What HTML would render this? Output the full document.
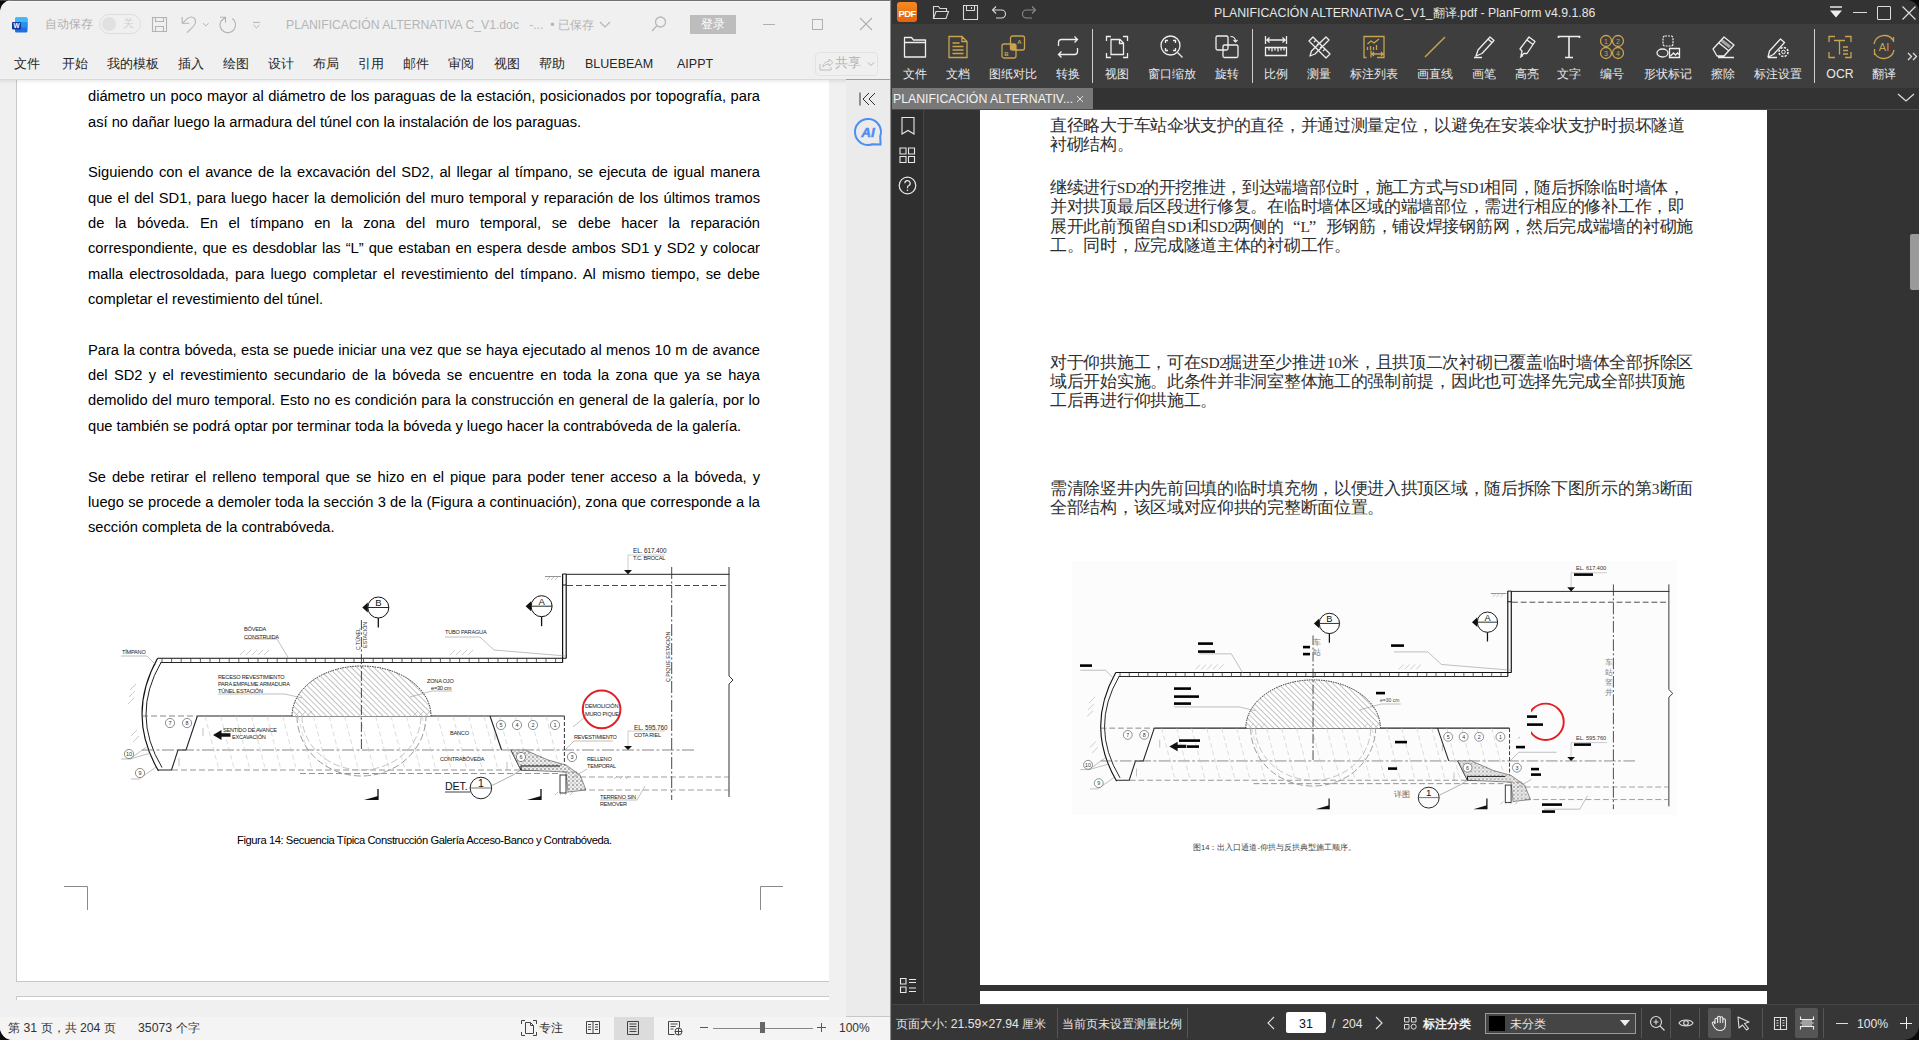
<!DOCTYPE html>
<html><head><meta charset="utf-8">
<style>
*{margin:0;padding:0;box-sizing:border-box}
html,body{width:1919px;height:1040px;overflow:hidden;background:#0a0a0a;font-family:"Liberation Sans",sans-serif}
.abs{position:absolute}
#word{position:absolute;left:0;top:0;width:891px;height:1040px;background:#f0f0f0;overflow:hidden;border-top-left-radius:12px;border-bottom-left-radius:13px}
#pdf{position:absolute;left:891px;top:0;width:1028px;height:1040px;background:#333;overflow:hidden}
.t{position:absolute;white-space:nowrap}
.wl{position:absolute;left:88px;width:672px;font-size:14.7px;line-height:24px;color:#000;white-space:nowrap}
.cn{position:absolute;left:159px;font-size:17px;letter-spacing:-0.3px;line-height:19.2px;color:#2e2e2e;white-space:nowrap;font-family:"Liberation Serif",serif}
.fw{display:inline-block;width:16.7px;letter-spacing:0}
.hw{display:inline-block;text-align:center;font-family:"Liberation Serif",serif;font-size:15.5px;letter-spacing:-0.5px}
.wl.j{text-align:justify;text-align-last:justify;white-space:normal}
</style></head><body>
<div class="abs" style="left:0;top:0;width:1919px;height:1px;background:#3a3a3a"></div>

<div id="word">
  <div class="abs" style="left:0;top:0;width:891px;height:1px;background:#707070"></div>
  <div class="abs" style="left:0;top:1px;width:890px;height:1px;background:#f7f7f7"></div>
  <!-- title bar -->
  <svg class="abs" style="left:12px;top:17px" width="16" height="16" viewBox="0 0 16 16">
    <rect x="3" y="0.5" width="12.5" height="15" rx="1.5" fill="#1e6fe0"/>
    <rect x="3" y="0.5" width="12.5" height="5" rx="1.2" fill="#41b8f8"/>
    <rect x="3" y="5.5" width="12.5" height="5" fill="#2a8ef0"/>
    <rect x="0" y="5" width="9" height="7.5" rx="1" fill="#13399e"/>
    <text x="4.5" y="11" font-size="6.5" font-weight="bold" fill="#fff" text-anchor="middle" font-family="Liberation Sans">W</text>
  </svg>
  <div class="t" style="left:45px;top:16px;font-size:12px;line-height:16px;color:#b0b0b0">自动保存</div>
  <div class="abs" style="left:99px;top:14px;width:42px;height:20px;border:1px solid #dedede;border-radius:10px"></div>
  <div class="abs" style="left:102px;top:17px;width:14px;height:14px;border-radius:7px;background:#e1e1e1"></div>
  <div class="t" style="left:123px;top:16px;font-size:11px;line-height:14px;color:#d0d0d0">关</div>
  <svg class="abs" style="left:150px;top:15px" width="120" height="20" viewBox="0 0 120 20" fill="none" stroke="#b3b3b3" stroke-width="1.1">
    <path d="M2.5 2.5h14v14h-14z M5.5 2.5v4h8v-4 M5.5 16.5v-5h8v5"/>
    <path d="M32.2 2 V8.3 H39.2 M32.8 8 C36 4.5, 38.5 2, 41 2 C 44 2, 46 4.5, 45.5 7.5 C 45 10.5, 42 13, 37 17.6"/>
    <path d="M53 8.2 l2.8 2.6 l2.8 -2.6" stroke-width="1"/>
    <path d="M70 2.3 H75.5 V7.7 M82.3 3.46 A7.8 7.8 0 1 1 71.05 5.95 L75.3 2.5"/>
    <path d="M103 7.4 H110 M103.5 10 l3 2.8 l3 -2.8" stroke-width="1"/>
  </svg>
  <div class="t" style="left:286px;top:16.5px;font-size:12.2px;line-height:17px;color:#b5b5b5">PLANIFICACIÓN ALTERNATIVA C_V1.doc&nbsp;&nbsp;&nbsp;-...&nbsp;&nbsp;•&nbsp;已保存</div>
  <svg class="abs" style="left:598px;top:19px" width="14" height="10" viewBox="0 0 14 10" fill="none" stroke="#b5b5b5" stroke-width="1.2"><path d="M2 3 l5 5 l5 -5"/></svg>
  <svg class="abs" style="left:650px;top:15px" width="18" height="18" viewBox="0 0 18 18" fill="none" stroke="#b8b8b8" stroke-width="1.3"><circle cx="10.5" cy="7" r="5"/><path d="M7 10.5 L2 16"/></svg>
  <div class="abs" style="left:690px;top:15px;width:46px;height:19px;background:#bdbdbd;color:#fff;font-size:12px;line-height:19px;text-align:center">登录</div>
  <div class="abs" style="left:763px;top:24px;width:12px;height:1px;background:#b0b0b0"></div>
  <div class="abs" style="left:812px;top:19px;width:11px;height:11px;border:1px solid #b0b0b0"></div>
  <svg class="abs" style="left:859px;top:17px" width="14" height="14" viewBox="0 0 14 14" stroke="#b0b0b0" stroke-width="1.1"><path d="M1 1 L13 13 M13 1 L1 13"/></svg>
  <!-- ribbon tabs -->
  <div class="t" style="left:14px;top:55px;font-size:13px;line-height:17px;color:#262626">文件</div>
  <div class="t" style="left:62px;top:55px;font-size:13px;line-height:17px;color:#262626">开始</div>
  <div class="t" style="left:107px;top:55px;font-size:13px;line-height:17px;color:#262626">我的模板</div>
  <div class="t" style="left:178px;top:55px;font-size:13px;line-height:17px;color:#262626">插入</div>
  <div class="t" style="left:223px;top:55px;font-size:13px;line-height:17px;color:#262626">绘图</div>
  <div class="t" style="left:268px;top:55px;font-size:13px;line-height:17px;color:#262626">设计</div>
  <div class="t" style="left:313px;top:55px;font-size:13px;line-height:17px;color:#262626">布局</div>
  <div class="t" style="left:358px;top:55px;font-size:13px;line-height:17px;color:#262626">引用</div>
  <div class="t" style="left:403px;top:55px;font-size:13px;line-height:17px;color:#262626">邮件</div>
  <div class="t" style="left:448px;top:55px;font-size:13px;line-height:17px;color:#262626">审阅</div>
  <div class="t" style="left:494px;top:55px;font-size:13px;line-height:17px;color:#262626">视图</div>
  <div class="t" style="left:539px;top:55px;font-size:13px;line-height:17px;color:#262626">帮助</div>
  <div class="t" style="left:585px;top:56px;font-size:12.5px;line-height:17px;color:#262626">BLUEBEAM</div>
  <div class="t" style="left:677px;top:56px;font-size:12.5px;line-height:17px;color:#262626">AIPPT</div>
  <div class="abs" style="left:815px;top:52px;width:63px;height:24px;border:1px solid #e3e3e3;border-radius:4px"></div>
  <svg class="abs" style="left:818px;top:56px" width="16" height="16" viewBox="0 0 16 16" fill="none" stroke="#bdbdbd" stroke-width="1"><path d="M2 8v6h11v-3 M5 11 C5 7, 8 5.5, 11 5.5 V3 l4 3.5 l-4 3.5 V8 C 8.5 8, 6.5 9, 5 11z"/></svg>
  <div class="t" style="left:835px;top:55px;font-size:13px;line-height:16px;color:#b3b3b3">共享</div>
  <svg class="abs" style="left:866px;top:60px" width="10" height="8" viewBox="0 0 10 8" fill="none" stroke="#b3b3b3" stroke-width="1"><path d="M2 2.5 l3 3 l3 -3"/></svg>
  <div class="abs" style="left:0;top:79px;width:891px;height:1px;background:#d9d9d9"></div>
  <!-- doc area -->
  <div class="abs" style="left:16px;top:80px;width:813px;height:902px;background:#fff;border-left:1px solid #c8c8c8;border-bottom:1px solid #c8c8c8"></div>
  <div class="abs" style="left:16px;top:996px;width:813px;height:4px;background:#fff;border-left:1px solid #c8c8c8;border-top:1px solid #c8c8c8"></div>
  <div class="abs" style="left:846px;top:80px;width:44px;height:936px;background:#ebebeb"></div>
  <div class="abs" style="left:846px;top:79px;width:44px;height:1px;background:#9e9e9e"></div>
  <div class="abs" style="left:0;top:80px;width:846px;height:4px;background:linear-gradient(rgba(0,0,0,0.07),rgba(0,0,0,0))"></div>
  <div id="wtext">
<div class="wl j" style="top:84.1px">diámetro un poco mayor al diámetro de los paraguas de la estación, posicionados por topografía, para</div>
<div class="wl" style="top:109.5px">así no dañar luego la armadura del túnel con la instalación de los paraguas.</div>
<div class="wl j" style="top:160.2px">Siguiendo con el avance de la excavación del SD2, al llegar al tímpano, se ejecuta de igual manera</div>
<div class="wl j" style="top:185.5px">que el del SD1, para luego hacer la demolición del muro temporal y reparación de los últimos tramos</div>
<div class="wl j" style="top:210.9px">de la bóveda. En el tímpano en la zona del muro temporal, se debe hacer la reparación</div>
<div class="wl j" style="top:236.3px">correspondiente, que es desdoblar las “L” que estaban en espera desde ambos SD1 y SD2 y colocar</div>
<div class="wl j" style="top:261.6px">malla electrosoldada, para luego completar el revestimiento del tímpano. Al mismo tiempo, se debe</div>
<div class="wl" style="top:287.0px">completar el revestimiento del túnel.</div>
<div class="wl j" style="top:337.7px">Para la contra bóveda, esta se puede iniciar una vez que se haya ejecutado al menos 10 m de avance</div>
<div class="wl j" style="top:363.1px">del SD2 y el revestimiento secundario de la bóveda se encuentre en toda la zona que ya se haya</div>
<div class="wl j" style="top:388.4px">demolido del muro temporal. Esto no es condición para la construcción en general de la galería, por lo</div>
<div class="wl" style="top:413.8px">que también se podrá optar por terminar toda la bóveda y luego hacer la contrabóveda de la galería.</div>
<div class="wl j" style="top:464.5px">Se debe retirar el relleno temporal que se hizo en el pique para poder tener acceso a la bóveda, y</div>
<div class="wl j" style="top:489.9px">luego se procede a demoler toda la sección 3 de la (Figura a continuación), zona que corresponde a la</div>
<div class="wl" style="top:515.2px">sección completa de la contrabóveda.</div>
  </div>
<svg class="abs" style="left:0;top:0" width="891" height="1040" font-family="Liberation Sans">
<defs>
<pattern id="hatch" patternUnits="userSpaceOnUse" width="4" height="4" patternTransform="rotate(-45)"><rect width="4" height="4" fill="#fff"/><path d="M0 0 V4" stroke="#777" stroke-width="0.9"/></pattern>
<pattern id="grav" patternUnits="userSpaceOnUse" width="4" height="4"><rect width="4" height="4" fill="#eee"/><circle cx="1" cy="1" r="0.7" fill="#444"/><circle cx="3" cy="3" r="0.6" fill="#777"/></pattern>
</defs>
<g id="dl" fill="none">
<path d="M157.6 658.3 H566" stroke="#111" stroke-width="1.1"/>
<path d="M160.5 662.5 H562.6" stroke="#222" stroke-width="1"/>
<path d="M162.0 658.5 V662.5 M171.6 658.5 V662.5 M181.2 658.5 V662.5 M190.8 658.5 V662.5 M200.4 658.5 V662.5 M210.0 658.5 V662.5 M219.6 658.5 V662.5 M229.2 658.5 V662.5 M238.8 658.5 V662.5 M248.4 658.5 V662.5 M258.0 658.5 V662.5 M267.6 658.5 V662.5 M277.2 658.5 V662.5 M286.8 658.5 V662.5 M296.4 658.5 V662.5 M306.0 658.5 V662.5 M315.6 658.5 V662.5 M325.2 658.5 V662.5 M334.8 658.5 V662.5 M344.4 658.5 V662.5 M354.0 658.5 V662.5 M363.6 658.5 V662.5 M373.2 658.5 V662.5 M382.8 658.5 V662.5 M392.4 658.5 V662.5 M402.0 658.5 V662.5 M411.6 658.5 V662.5 M421.2 658.5 V662.5 M430.8 658.5 V662.5 M440.4 658.5 V662.5 M450.0 658.5 V662.5 M459.6 658.5 V662.5 M469.2 658.5 V662.5 M478.8 658.5 V662.5 M488.4 658.5 V662.5 M498.0 658.5 V662.5 M507.6 658.5 V662.5 M517.2 658.5 V662.5 M526.8 658.5 V662.5 M536.4 658.5 V662.5 M546.0 658.5 V662.5 M555.6 658.5 V662.5" stroke="#333" stroke-width="0.8"/>
<path d="M562.6 574 V662.5 M566.2 574 V658.5" stroke="#111" stroke-width="1.2"/>
<path d="M562.6 574 H566.2 M562.6 585 H566.2" stroke="#111" stroke-width="1"/>
<path d="M566 574.3 H729.5" stroke="#222" stroke-width="1"/>
<path d="M567 585.5 H729" stroke="#333" stroke-width="0.9" stroke-dasharray="6 3"/>
<path d="M729 567 V676 l4 4 l-4 4 V797" stroke="#333" stroke-width="1"/>
<path d="M671.7 567 V800" stroke="#333" stroke-width="0.9" stroke-dasharray="12 2.5 2 2.5"/>
<path d="M545 576.5 H561" stroke="#777" stroke-width="0.8"/>
<path d="M547 580 l3 -3 M551 580 l3 -3 M555 580 l3 -3" stroke="#999" stroke-width="0.6"/>
<path d="M157.6 658.3 Q126 715 158.5 771" stroke="#111" stroke-width="1.15" fill="none"/>
<path d="M161 662.5 Q130.5 715 162 767.5" stroke="#222" stroke-width="1" fill="none"/>
<path d="M197.4 716 H564.4" stroke="#222" stroke-width="1.1"/>
<path d="M142 716 H197" stroke="#555" stroke-width="0.7" stroke-dasharray="6 3"/>
<path d="M197.4 716 L186 750 H178 L171.5 770 H158" stroke="#222" stroke-width="1.1" fill="none"/>
<path d="M142 750 H695" stroke="#555" stroke-width="0.7" stroke-dasharray="12 2.5 3 2.5"/>
<path d="M172 770 H560" stroke="#666" stroke-width="0.7" stroke-dasharray="6 3"/>
<path d="M300 773.5 H560" stroke="#777" stroke-width="0.8" stroke-dasharray="6 3"/>
<path d="M490 716 L501.6 750 M511 750 L521 770 H562" stroke="#222" stroke-width="1.1" fill="none"/>
<path d="M564.4 716 V772" stroke="#333" stroke-width="1" stroke-dasharray="4 2"/>
<path d="M205.0 716 L219.0 770 M220.5 716 L234.5 770 M236.0 716 L250.0 770 M251.5 716 L265.5 770 M267.0 716 L281.0 770 M282.5 716 L296.5 770 M298.0 716 L312.0 770 M313.5 716 L327.5 770 M329.0 716 L343.0 770 M344.5 716 L358.5 770 M360.0 716 L374.0 770 M375.5 716 L389.5 770 M391.0 716 L405.0 770 M406.5 716 L420.5 770 M422.0 716 L436.0 770 M437.5 716 L451.5 770 M453.0 716 L467.0 770 M468.5 716 L482.5 770 M484.0 716 L498.0 770 M499.5 716 L513.5 770 M515.0 716 L529.0 770 M530.5 716 L544.5 770 M546.0 716 L560.0 770" stroke="#c4c4c4" stroke-width="0.6" stroke-dasharray="5 3"/>
<path d="M292 716 A69.5 50 0 0 1 431 716 Z" fill="url(#hatch)" stroke="none"/>
<path d="M292 716 A69.5 50 0 0 1 431 716" stroke="#222" stroke-width="1" fill="none" stroke-dasharray="1.5 1"/>
<path d="M297 716 A64.5 60 0 0 0 426 716" stroke="#9a9a9a" stroke-width="1" fill="none" stroke-dasharray="7 3"/>
<path d="M302 716 A59.5 54 0 0 0 421 716" stroke="#b5b5b5" stroke-width="0.8" fill="none" stroke-dasharray="7 3"/>
<path d="M361.4 620 V750" stroke="#333" stroke-width="0.9" stroke-dasharray="10 2.5 2 2.5"/>
<circle cx="378.3" cy="607.5" r="10.5" stroke="#111" stroke-width="1" fill="#fff"/>
<path d="M367.8 607.5 H388.8" stroke="#111" stroke-width="0.9"/>
<path d="M367.8 602.5 L362.3 607.5 L367.8 612.5 Z" fill="#111"/>
<path d="M378.3 618.0 V627.5" stroke="#111" stroke-width="1.3"/>
<text x="378.3" y="606.0" font-size="9.5" text-anchor="middle" fill="#111">B</text>
<circle cx="541.6" cy="606.2" r="10.5" stroke="#111" stroke-width="1" fill="#fff"/>
<path d="M531.1 606.2 H552.1" stroke="#111" stroke-width="0.9"/>
<path d="M531.1 601.2 L525.6 606.2 L531.1 611.2 Z" fill="#111"/>
<path d="M541.6 616.7 V626.2" stroke="#111" stroke-width="1.3"/>
<text x="541.6" y="604.7" font-size="9.5" text-anchor="middle" fill="#111">A</text>
<path d="M378 789 V800 M541 789 V800" stroke="#111" stroke-width="1.3"/>
<path d="M364 800 L378 796 V800 Z M527 800 L541 796 V800 Z" fill="#111"/>
<path d="M511 750 L525 750 L548 760 L566 765 L580 775 L586 790 L568 792 L566 772 L521 770 Z" fill="url(#grav)" stroke="#444" stroke-width="0.6"/>
<path d="M521 766 H560 M521 766 V770" stroke="#111" stroke-width="1"/>
<rect x="560" y="775" width="6" height="18" fill="#fff" stroke="#222" stroke-width="0.9"/>
<path d="M562 772 H580 M580 777 H729 M580 790 H729" stroke="#777" stroke-width="0.7" stroke-dasharray="6 3"/>
<path d="M555 795 l3 -3 M560 795 l3 -3 M565 795 l3 -3 M570 795 l3 -3 M614 779 l3 -3 M620 779 l3 -3 M626 779 l3 -3" stroke="#999" stroke-width="0.6"/>
<path d="M624 570 L632 570 L628 574.3 Z M624 746 L632 746 L628 750 Z" fill="#111"/>
<path d="M628 570 V555 H665 M628 746 V731 H665" stroke="#999" stroke-width="0.5" fill="none"/>
<path d="M121 656 H147 L156 665 M244 639 H277 L289 659 M445 637 H480 L494 650 L566 656 M218 694 H285 L302 698 M452 691 H432 L410 697 M585 717 L573 727 M574 741 H613 M574 741 L565 750 M587 769 L572 778 M600 800 H637 L645 786 M121 759 H130 L146.4 747 M130 759 L149.8 753.3 M131 779 H139 L156 767" stroke="#8a8a8a" stroke-width="0.55" fill="none"/>
<circle cx="601.6" cy="709.4" r="18.8" stroke="#e01f26" stroke-width="2" fill="none"/>
<circle cx="170" cy="723" r="4.6" stroke="#444" stroke-width="0.6" fill="#fff"/>
<text x="170" y="725" font-size="5.5" text-anchor="middle" fill="#333">7</text>
<circle cx="187" cy="723" r="4.6" stroke="#444" stroke-width="0.6" fill="#fff"/>
<text x="187" y="725" font-size="5.5" text-anchor="middle" fill="#333">8</text>
<circle cx="129" cy="754" r="4.6" stroke="#444" stroke-width="0.6" fill="#fff"/>
<text x="129" y="756" font-size="5.5" text-anchor="middle" fill="#333">10</text>
<circle cx="140" cy="773" r="4.6" stroke="#444" stroke-width="0.6" fill="#fff"/>
<text x="140" y="775" font-size="5.5" text-anchor="middle" fill="#333">9</text>
<circle cx="501" cy="725" r="4.6" stroke="#444" stroke-width="0.6" fill="#fff"/>
<text x="501" y="727" font-size="5.5" text-anchor="middle" fill="#333">5</text>
<circle cx="517" cy="725" r="4.6" stroke="#444" stroke-width="0.6" fill="#fff"/>
<text x="517" y="727" font-size="5.5" text-anchor="middle" fill="#333">4</text>
<circle cx="533" cy="725" r="4.6" stroke="#444" stroke-width="0.6" fill="#fff"/>
<text x="533" y="727" font-size="5.5" text-anchor="middle" fill="#333">2</text>
<circle cx="555" cy="725" r="4.6" stroke="#444" stroke-width="0.6" fill="#fff"/>
<text x="555" y="727" font-size="5.5" text-anchor="middle" fill="#333">1</text>
<circle cx="572" cy="757" r="4.6" stroke="#444" stroke-width="0.6" fill="#fff"/>
<text x="572" y="759" font-size="5.5" text-anchor="middle" fill="#333">3</text>
<circle cx="521" cy="757" r="4.6" stroke="#444" stroke-width="0.6" fill="#fff"/>
<text x="521" y="759" font-size="5.5" text-anchor="middle" fill="#333">6</text>
<path d="M130 690 l6 -6 M129 697 l6 -6 M128 704 l6 -6 M131 736 l6 -6 M133 742 l6 -6 M240 655 l5 -5 M246 655 l5 -5 M252 655 l5 -5 M258 655 l5 -5 M264 655 l5 -5 M450 655 l5 -5 M456 655 l5 -5 M462 655 l5 -5 M468 655 l5 -5 M295 716 l5 -5 M301 716 l5 -5 M307 716 l5 -5 M413 716 l5 -5 M419 716 l5 -5 M425 716 l5 -5" stroke="#aaa" stroke-width="0.6"/>
<path d="M203 728 V736 M179 758 V766 M495 732 V740 M507 762 V770" stroke="#999" stroke-width="0.6"/>
<circle cx="480.9" cy="788" r="10.8" stroke="#222" stroke-width="1" fill="none"/>
<path d="M470.1 788 H491.7" stroke="#333" stroke-width="0.7"/>
<path d="M491 786 L513 775 L521 770" stroke="#777" stroke-width="0.6" fill="none"/>
</g>
<text x="122" y="654" font-size="5.6" fill="#1a1a1a" letter-spacing="-0.22">TÍMPANO</text>
<text x="244" y="631" font-size="5.6" fill="#1a1a1a" letter-spacing="-0.22">BÓVEDA</text>
<text x="244" y="638.5" font-size="5.6" fill="#1a1a1a" letter-spacing="-0.22">CONSTRUIDA</text>
<text x="445" y="634" font-size="5.6" fill="#1a1a1a" letter-spacing="-0.22">TUBO PARAGUA</text>
<text x="218" y="679" font-size="5.6" fill="#1a1a1a" letter-spacing="-0.22">RECESO REVESTIMIENTO</text>
<text x="218" y="686" font-size="5.6" fill="#1a1a1a" letter-spacing="-0.22">PARA EMPALME ARMADURA</text>
<text x="218" y="692.5" font-size="5.6" fill="#1a1a1a" letter-spacing="-0.22">TÚNEL ESTACIÓN</text>
<text x="427" y="683" font-size="5.6" fill="#1a1a1a" letter-spacing="-0.22">ZONA OJO</text>
<text x="431" y="690" font-size="5.6" fill="#1a1a1a" letter-spacing="-0.22">e=30 cm</text>
<text x="223" y="732" font-size="5.6" fill="#1a1a1a" letter-spacing="-0.22">SENTIDO DE AVANCE</text>
<text x="232" y="739" font-size="5.6" fill="#1a1a1a" letter-spacing="-0.22">EXCAVACIÓN</text>
<text x="450" y="735" font-size="5.6" fill="#1a1a1a" letter-spacing="-0.22">BANCO</text>
<text x="440" y="761" font-size="5.6" fill="#1a1a1a" letter-spacing="-0.22">CONTRABÓVEDA</text>
<text x="574" y="739" font-size="5.6" fill="#1a1a1a" letter-spacing="-0.22">REVESTIMIENTO</text>
<text x="587" y="761" font-size="5.6" fill="#1a1a1a" letter-spacing="-0.22">RELLENO</text>
<text x="587" y="768" font-size="5.6" fill="#1a1a1a" letter-spacing="-0.22">TEMPORAL</text>
<text x="600" y="799" font-size="5.6" fill="#1a1a1a" letter-spacing="-0.22">TERRENO SIN</text>
<text x="600" y="806" font-size="5.6" fill="#1a1a1a" letter-spacing="-0.22">REMOVER</text>
<text x="633" y="560" font-size="5.6" fill="#1a1a1a" letter-spacing="-0.22">T.C. BROCAL</text>
<text x="634" y="737" font-size="5.6" fill="#1a1a1a" letter-spacing="-0.22">COTA RIEL</text>
<text x="585" y="708" font-size="5.6" fill="#1a1a1a" letter-spacing="-0.22">DEMOLICIÓN</text>
<text x="585" y="716" font-size="5.6" fill="#1a1a1a" letter-spacing="-0.22">MURO PIQUE</text>
<text x="360" y="650" font-size="5.3" fill="#333" transform="rotate(-90 360 650)" letter-spacing="-0.1">Ç TÚNEL</text>
<text x="366.5" y="648" font-size="5.3" fill="#333" transform="rotate(-90 366.5 648)" letter-spacing="-0.1">ESTACIÓN</text>
<text x="670" y="682" font-size="5.5" fill="#333" transform="rotate(-90 670 682)" letter-spacing="-0.1">Ç PIQUE ESTACIÓN</text>
<text x="445" y="789.5" font-size="10.6" fill="#111" letter-spacing="-0.1">DET.</text>
<text x="633" y="553" font-size="6.4" fill="#222" letter-spacing="-0.1">EL. 617.400</text>
<text x="634" y="730" font-size="6.4" fill="#222" letter-spacing="-0.1">EL. 595.760</text>
<path d="M445 792 H470" stroke="#111" stroke-width="0.8"/>
<text x="480.9" y="786.5" font-size="10.5" text-anchor="middle" fill="#111">1</text>
<path d="M213 735 L221.5 730 V733.3 H230.5 V736.7 H221.5 V740 Z" fill="#111"/>
<text x="237" y="843.5" font-size="11.2" fill="#000" letter-spacing="-0.42">Figura 14: Secuencia Típica Construcción Galería Acceso-Banco y Contrabóveda.</text>
</svg>
  <svg class="abs" style="left:60px;top:880px" width="730" height="35" fill="none" stroke="#8a8a8a" stroke-width="1">
    <path d="M4 6.5 H27.5 V30"/>
    <path d="M700.5 30 V6.5 H723"/>
  </svg>
  <!-- side pane -->
  <svg class="abs" style="left:858px;top:90px" width="20" height="18" viewBox="0 0 20 18" fill="none" stroke="#333" stroke-width="1"><path d="M2 2.5v13 M11 3 l-6 6 l6 6 M17 3 l-6 6 l6 6"/></svg>
  <svg class="abs" style="left:853px;top:116px" width="32" height="32" viewBox="0 0 32 32">
    <path d="M27.2 20.4 A13 13 0 1 0 19.4 28.2 L27.6 28.6 Z" fill="none" stroke="#4a8ff5" stroke-width="2" stroke-linejoin="round"/>
    <text x="15" y="20.5" font-size="13.5" font-weight="bold" font-style="italic" fill="#4f8cf2" text-anchor="middle" font-family="Liberation Sans" stroke="#4f8cf2" stroke-width="0.5">AI</text>
  </svg>
  <!-- status bar -->
  <div class="abs" style="left:0;top:1017px;width:891px;height:23px;background:#f4f4f4"></div>
  <div class="t" style="left:8px;top:1020px;font-size:12.3px;line-height:16px;color:#333">第 31 页，共 204 页</div><div class="t" style="left:138px;top:1020px;font-size:12.3px;line-height:16px;color:#333">35073 个字</div>
  <svg class="abs" style="left:520px;top:1019px" width="18" height="18" viewBox="0 0 18 18" fill="none" stroke="#444" stroke-width="1"><path d="M1.5 5V1.5H5 M13 1.5h3.5V5 M16.5 13v3.5H13 M5 16.5H1.5V13 M5.5 3.5h5l3 3v8h-8z M10.5 3.5v3h3"/></svg>
  <div class="t" style="left:539px;top:1020px;font-size:12px;line-height:16px;color:#333">专注</div>
  <svg class="abs" style="left:585px;top:1020px" width="16" height="15" viewBox="0 0 16 15" fill="none" stroke="#444" stroke-width="1"><path d="M1.5 1.5h13v12h-13z M8 1.5v12 M3 4.5h3 M3 7h3 M3 9.5h3 M10 4.5h3 M10 7h3 M10 9.5h3"/></svg>
  <div class="abs" style="left:614px;top:1017px;width:40px;height:23px;background:#dcdcdc"></div>
  <svg class="abs" style="left:625px;top:1020px" width="16" height="16" viewBox="0 0 16 16" fill="none" stroke="#444" stroke-width="1"><path d="M2.5 1.5h11v13h-11z M4.5 4h7 M4.5 6.5h7 M4.5 9h7 M4.5 11.5h7"/></svg>
  <svg class="abs" style="left:666px;top:1019px" width="18" height="18" viewBox="0 0 18 18" fill="none" stroke="#444" stroke-width="1"><path d="M2.5 2.5h11v6 M2.5 2.5v13h6 M4.5 5h7 M4.5 7.5h5 M4.5 10h3"/><circle cx="12.5" cy="12.5" r="3.5"/><path d="M9 12.5h7 M12.5 9v7"/></svg>
  <div class="abs" style="left:700px;top:1027px;width:8px;height:1px;background:#555"></div>
  <div class="abs" style="left:713px;top:1028px;width:100px;height:1px;background:#888"></div>
  <div class="abs" style="left:760px;top:1022px;width:5px;height:11px;background:#666"></div>
  <svg class="abs" style="left:816px;top:1022px" width="11" height="11" viewBox="0 0 11 11" stroke="#555" stroke-width="1"><path d="M1 5.5h9 M5.5 1v9"/></svg>
  <div class="t" style="left:839px;top:1020px;font-size:12px;line-height:16px;color:#333">100%</div>
  <div class="abs" style="left:846px;top:1016px;width:44px;height:1px;background:#c8c8c8"></div>
  <div class="abs" style="left:890px;top:0;width:1px;height:1040px;background:#8c8c8c"></div>
</div>

<div id="pdf">
<div class="abs" style="left:0px;top:0px;width:1028px;height:24px;background:#333333"></div>
<svg class="abs" style="left:6px;top:2px" width="21" height="21" viewBox="0 0 21 21" ><defs><linearGradient id="og" x1="0" y1="0" x2="0" y2="1"><stop offset="0" stop-color="#f58a22"/><stop offset="1" stop-color="#e8630a"/></linearGradient></defs><rect x="0" y="0" width="20" height="20" rx="3" fill="url(#og)"/><text x="10" y="14.5" font-size="9.5" font-weight="bold" fill="#fff" text-anchor="middle" font-family="Liberation Sans" letter-spacing="-0.6">PDF</text></svg>
<svg class="abs" style="left:41px;top:4px" width="18" height="17" viewBox="0 0 18 17" ><path d="M1.5 14.5V2.5h5l1.5 2h6.5v3" fill="none" stroke="#d8d8d8" stroke-width="1.1"/><path d="M1.5 14.5l2.5-7h12.5l-2.5 7z" fill="none" stroke="#d8d8d8" stroke-width="1.1"/></svg>
<svg class="abs" style="left:71px;top:4px" width="17" height="17" viewBox="0 0 17 17" ><path d="M1.5 1.5h14v14h-14z M4.5 1.5v5h8v-5 M9.5 3v2" fill="none" stroke="#d8d8d8" stroke-width="1.1"/></svg>
<svg class="abs" style="left:100px;top:4px" width="17" height="17" viewBox="0 0 17 17" ><path d="M5 2.5l-3.5 3.5 3.5 3.5 M1.5 6h9a4 4 0 0 1 0 8H5" fill="none" stroke="#d8d8d8" stroke-width="1.1"/></svg>
<svg class="abs" style="left:129px;top:4px" width="17" height="17" viewBox="0 0 17 17" ><path d="M12 2.5l3.5 3.5 -3.5 3.5 M15.5 6h-9a4 4 0 0 0 0 8H12" fill="none" stroke="#8a8a8a" stroke-width="1.1"/></svg>
<div class="t" style="left:323px;top:4px;font-size:12.3px;line-height:18px;color:#e6e6e6">PLANIFICACIÓN ALTERNATIVA C_V1_翻译.pdf - PlanForm v4.9.1.86</div>
<svg class="abs" style="left:937px;top:4px" width="16" height="16" viewBox="0 0 16 16" ><path d="M2 3h12" stroke="#ddd" stroke-width="1.6"/><path d="M2 6.5h12l-6 7z" fill="#eee"/></svg>
<div class="abs" style="left:962px;top:12px;width:14px;height:1px;background:#ddd"></div>
<div class="abs" style="left:986px;top:6px;width:14px;height:14px;border:1.3px solid #ddd;border-radius:1px"></div>
<svg class="abs" style="left:1010px;top:5px" width="16" height="16" viewBox="0 0 16 16" ><path d="M1.5 1.5l13 13 M14.5 1.5l-13 13" stroke="#ddd" stroke-width="1.2"/></svg>
<svg class="abs" style="left:1016px;top:0px" width="12" height="12" viewBox="0 0 12 12" ><path d="M0 0H12V12A12 12 0 0 0 0 0Z" fill="#0a0a0a"/></svg>
<div class="abs" style="left:0px;top:24px;width:1028px;height:64px;background:#3e3e3e"></div>
<svg class="abs" style="left:11px;top:34px" width="26" height="26" viewBox="0 0 26 26" ><path d="M2.5 6V3.5h7l2 2.5h12v17h-21z M2.5 8.5h21" stroke="#eeeeee" stroke-width="1.3" fill="none" stroke-linejoin="round"/></svg>
<div class="t" style="left:-16px;top:66px;width:80px;text-align:center;font-size:12.3px;line-height:16px;color:#e9e9e9">文件</div>
<svg class="abs" style="left:54px;top:34px" width="26" height="26" viewBox="0 0 26 26" ><path d="M4 2.5h13l5 5v16h-18z M17 2.5v5h5 M7.5 9h7 M7.5 12.5h11 M7.5 16h11 M7.5 19.5h11" stroke="#c9a34e" stroke-width="1.3" fill="none"/></svg>
<div class="t" style="left:27px;top:66px;width:80px;text-align:center;font-size:12.3px;line-height:16px;color:#e9e9e9">文档</div>
<svg class="abs" style="left:109px;top:34px" width="26" height="26" viewBox="0 0 26 26" ><rect x="10.5" y="2" width="14" height="14" rx="2" stroke="#c9a34e" stroke-width="1.3" fill="none"/><rect x="2" y="10" width="14" height="14" rx="2" stroke="#c9a34e" stroke-width="1.3" fill="none"/><rect x="10.5" y="10" width="5.5" height="6" fill="#c9a34e"/><text x="19.5" y="10" font-size="6" fill="#c9a34e" text-anchor="middle" font-family="Liberation Sans" font-weight="bold">A</text><text x="6.5" y="21.5" font-size="6" fill="#c9a34e" text-anchor="middle" font-family="Liberation Sans" font-weight="bold">B</text></svg>
<div class="t" style="left:82px;top:66px;width:80px;text-align:center;font-size:12.3px;line-height:16px;color:#e9e9e9">图纸对比</div>
<svg class="abs" style="left:164px;top:34px" width="26" height="26" viewBox="0 0 26 26" ><path d="M3.5 12V8.5a3 3 0 0 1 3-3h16 M19.5 2.5l3 3-3 3 M22.5 14v3.5a3 3 0 0 1-3 3h-16 M6.5 17.5l-3 3 3 3" stroke="#eeeeee" stroke-width="1.3" fill="none"/></svg>
<div class="t" style="left:137px;top:66px;width:80px;text-align:center;font-size:12.3px;line-height:16px;color:#e9e9e9">转换</div>
<div class="abs" style="left:201px;top:29px;width:1px;height:54px;background:#cfcfcf"></div>
<svg class="abs" style="left:213px;top:34px" width="26" height="26" viewBox="0 0 26 26" ><path d="M2.5 7V2.5H7 M19 2.5h4.5V7 M23.5 19v4.5H19 M7 23.5H2.5V19 M7 5.5h9l3.5 3.5v11.5H7z M15.5 5.5v4h4" stroke="#eeeeee" stroke-width="1.3" fill="none"/></svg>
<div class="t" style="left:186px;top:66px;width:80px;text-align:center;font-size:12.3px;line-height:16px;color:#e9e9e9">视图</div>
<svg class="abs" style="left:268px;top:34px" width="26" height="26" viewBox="0 0 26 26" ><circle cx="11.5" cy="11.5" r="9.5" stroke="#eeeeee" stroke-width="1.3" fill="none"/><path d="M18.5 18.5l5 5 M6.5 9V6.5H9 M14 6.5h2.5V9 M16.5 14v2.5H14 M9 16.5H6.5V14" stroke="#eeeeee" stroke-width="1.3" fill="none"/></svg>
<div class="t" style="left:241px;top:66px;width:80px;text-align:center;font-size:12.3px;line-height:16px;color:#e9e9e9">窗口缩放</div>
<svg class="abs" style="left:323px;top:34px" width="26" height="26" viewBox="0 0 26 26" ><rect x="2" y="2" width="12" height="14" rx="1.5" stroke="#eeeeee" stroke-width="1.3" fill="none"/><rect x="9" y="11" width="15" height="12.5" rx="1.5" stroke="#eeeeee" stroke-width="1.3" fill="none" fill="#3c3c3c"/><path d="M16.5 2.5c3 0 5 2 5 5 M19.5 6l2 2 2-2" stroke="#eeeeee" stroke-width="1.1" fill="none"/></svg>
<div class="t" style="left:296px;top:66px;width:80px;text-align:center;font-size:12.3px;line-height:16px;color:#e9e9e9">旋转</div>
<div class="abs" style="left:361px;top:29px;width:1px;height:54px;background:#cfcfcf"></div>
<svg class="abs" style="left:372px;top:34px" width="26" height="26" viewBox="0 0 26 26" ><path d="M2.5 2v8 M23.5 2v8 M4 6h18 M6.5 3.5L4 6l2.5 2.5 M19.5 3.5L22 6l-2.5 2.5 M2.5 13.5h21v8h-21z M6 13.5v3 M9 13.5v4 M12 13.5v3 M15 13.5v4 M18 13.5v3 M21 13.5v3" stroke="#eeeeee" stroke-width="1.3" fill="none"/></svg>
<div class="t" style="left:345px;top:66px;width:80px;text-align:center;font-size:12.3px;line-height:16px;color:#e9e9e9">比例</div>
<svg class="abs" style="left:415px;top:34px" width="26" height="26" viewBox="0 0 26 26" ><path d="M3 7l4-4 17 17-4 4z M8 8l2-2 M11 11l2-2 M14 14l2-2 M17 17l2-2 M20 3l3 3L9 20l-5 2 1.5-5z" stroke="#eeeeee" stroke-width="1.3" fill="none" stroke-linejoin="round"/></svg>
<div class="t" style="left:388px;top:66px;width:80px;text-align:center;font-size:12.3px;line-height:16px;color:#e9e9e9">测量</div>
<svg class="abs" style="left:470px;top:34px" width="26" height="26" viewBox="0 0 26 26" ><path d="M5.5 23.5h-2.5v-21h20v21h-7 M6.5 10l3.5-3 3 2 5-4 M6.5 16v-3 M9.5 16v-4 M12.5 16v-3 M15.5 16v-5 M10 16.5v7 M23 16.5v7 M11 20h11 M13 18l-2 2 2 2 M20 18l2 2-2 2" stroke="#c9a34e" stroke-width="1.3" fill="none"/></svg>
<div class="t" style="left:443px;top:66px;width:80px;text-align:center;font-size:12.3px;line-height:16px;color:#e9e9e9">标注列表</div>
<svg class="abs" style="left:531px;top:34px" width="26" height="26" viewBox="0 0 26 26" ><path d="M3 23L23 3" stroke="#c9a34e" stroke-width="1.5"/></svg>
<div class="t" style="left:504px;top:66px;width:80px;text-align:center;font-size:12.3px;line-height:16px;color:#e9e9e9">画直线</div>
<svg class="abs" style="left:580px;top:34px" width="26" height="26" viewBox="0 0 26 26" ><path d="M5 22l2-6 12-13 4 3.5-12 13z M17 5l4 3.5 M3 23.5h8" stroke="#eeeeee" stroke-width="1.3" fill="none" stroke-linejoin="round"/></svg>
<div class="t" style="left:553px;top:66px;width:80px;text-align:center;font-size:12.3px;line-height:16px;color:#e9e9e9">画笔</div>
<svg class="abs" style="left:623px;top:34px" width="26" height="26" viewBox="0 0 26 26" ><path d="M7 22l1-5-2-2 9-12 6 4.5-8 12-3 0z M13 6l6 4.5 M6 23.5l3-2" stroke="#eeeeee" stroke-width="1.3" fill="none" stroke-linejoin="round"/></svg>
<div class="t" style="left:596px;top:66px;width:80px;text-align:center;font-size:12.3px;line-height:16px;color:#e9e9e9">高亮</div>
<svg class="abs" style="left:665px;top:34px" width="26" height="26" viewBox="0 0 26 26" ><path d="M2.5 4V2.5h21V4 M13 2.5v21 M9 23.5h8" stroke="#eeeeee" stroke-width="1.6" fill="none"/></svg>
<div class="t" style="left:638px;top:66px;width:80px;text-align:center;font-size:12.3px;line-height:16px;color:#e9e9e9">文字</div>
<svg class="abs" style="left:708px;top:34px" width="26" height="26" viewBox="0 0 26 26" ><circle cx="7" cy="7" r="5.5" stroke="#c9a34e" stroke-width="1.3" fill="none"/><circle cx="19" cy="7" r="5.5" stroke="#c9a34e" stroke-width="1.3" fill="none"/><circle cx="7" cy="19" r="5.5" stroke="#c9a34e" stroke-width="1.3" fill="none"/><circle cx="19" cy="19" r="5.5" stroke="#c9a34e" stroke-width="1.3" fill="none"/><text x="7" y="9.5" font-size="7" fill="#c9a34e" text-anchor="middle" font-family="Liberation Sans">1</text><text x="19" y="9.5" font-size="7" fill="#c9a34e" text-anchor="middle" font-family="Liberation Sans">2</text><text x="7" y="21.5" font-size="7" fill="#c9a34e" text-anchor="middle" font-family="Liberation Sans">3</text><text x="19" y="21.5" font-size="7" fill="#c9a34e" text-anchor="middle" font-family="Liberation Sans">4</text></svg>
<div class="t" style="left:681px;top:66px;width:80px;text-align:center;font-size:12.3px;line-height:16px;color:#e9e9e9">编号</div>
<svg class="abs" style="left:764px;top:34px" width="26" height="26" viewBox="0 0 26 26" ><rect x="8" y="2" width="10" height="10" rx="2" stroke="#eeeeee" stroke-width="1.2" fill="none" stroke-dasharray="2 1"/><ellipse cx="7.5" cy="19" rx="5.5" ry="4" stroke="#eeeeee" stroke-width="1.3" fill="none"/><path d="M14.5 14.5h10v9h-10z M15.5 22l3-3 2 2 2-2 1.5 1.5" stroke="#eeeeee" stroke-width="1.3" fill="none"/></svg>
<div class="t" style="left:737px;top:66px;width:80px;text-align:center;font-size:12.3px;line-height:16px;color:#e9e9e9">形状标记</div>
<svg class="abs" style="left:819px;top:34px" width="26" height="26" viewBox="0 0 26 26" ><path d="M3 15L14 3l10 8-10 11H7z M9 9l10 8 M8 23.5h16" stroke="#eeeeee" stroke-width="1.3" fill="none" stroke-linejoin="round"/><path d="M11 6l9 7" stroke="#eeeeee" stroke-width="3" opacity="0.6"/></svg>
<div class="t" style="left:792px;top:66px;width:80px;text-align:center;font-size:12.3px;line-height:16px;color:#e9e9e9">擦除</div>
<svg class="abs" style="left:874px;top:34px" width="26" height="26" viewBox="0 0 26 26" ><path d="M3 23l1.5-6 11-12 4 3.5-11 12z M3 23.5h9" stroke="#eeeeee" stroke-width="1.3" fill="none" stroke-linejoin="round"/><circle cx="18.5" cy="18" r="4.5" stroke="#eeeeee" stroke-width="1.6" fill="#3c3c3c" stroke-dasharray="2.2 1.3"/><circle cx="18.5" cy="18" r="1.8" stroke="#eeeeee" stroke-width="1" fill="none"/></svg>
<div class="t" style="left:847px;top:66px;width:80px;text-align:center;font-size:12.3px;line-height:16px;color:#e9e9e9">标注设置</div>
<div class="abs" style="left:923px;top:29px;width:1px;height:54px;background:#cfcfcf"></div>
<svg class="abs" style="left:936px;top:34px" width="26" height="26" viewBox="0 0 26 26" ><path d="M2 8V2.5h6 M18 2.5h6V8 M24 18v5.5h-6 M8 23.5H2V18 M7 6.5h11 M12.5 6.5v14 M16 13h5 M16 16.5h5 M16 20h5" stroke="#c9a34e" stroke-width="1.3" fill="none"/></svg>
<div class="t" style="left:909px;top:66px;width:80px;text-align:center;font-size:12.3px;line-height:16px;color:#e9e9e9">OCR</div>
<svg class="abs" style="left:980px;top:34px" width="26" height="26" viewBox="0 0 26 26" ><path d="M22.5 7A10.5 10.5 0 0 0 3 10 M3.5 19A10.5 10.5 0 0 0 23 16 M22.5 3v5 M3.5 15v6" stroke="#c9a34e" stroke-width="1.3" fill="none"/><text x="13" y="17" font-size="11" fill="#c9a34e" text-anchor="middle" font-family="Liberation Sans">AI</text></svg>
<div class="t" style="left:953px;top:66px;width:80px;text-align:center;font-size:12.3px;line-height:16px;color:#e9e9e9">翻译</div>
<svg class="abs" style="left:1016px;top:52px" width="12" height="9" viewBox="0 0 12 9" ><path d="M1 1l3.5 3.5L1 8 M6 1l3.5 3.5L6 8" stroke="#ddd" stroke-width="1.3" fill="none"/></svg>
<div class="abs" style="left:0px;top:88px;width:1028px;height:22px;background:#333333"></div>
<div class="abs" style="left:1px;top:88px;width:201px;height:21px;background:#787878"></div>
<div class="t" style="left:2px;top:91px;font-size:12.3px;line-height:16px;color:#f2f2f2">PLANIFICACIÓN ALTERNATIV...</div>
<svg class="abs" style="left:185px;top:95px" width="8" height="8" viewBox="0 0 8 8" ><path d="M1 1l6 6M7 1l-6 6" stroke="#ddd" stroke-width="1"/></svg>
<svg class="abs" style="left:1005px;top:91px" width="20" height="14" viewBox="0 0 20 14" ><path d="M2 3l8 7 8-7" stroke="#ddd" stroke-width="1.2" fill="none"/></svg>
<div class="abs" style="left:0px;top:109px;width:1028px;height:1px;background:#4a4a4a"></div>
<div class="abs" style="left:1px;top:110px;width:31px;height:894px;background:#2f2f2f"></div>
<div class="abs" style="left:32px;top:110px;width:1px;height:893px;background:#454545"></div>
<svg class="abs" style="left:8px;top:115px" width="18" height="22" viewBox="0 0 18 22" ><path d="M3 2.5h12v16.5l-6-3.5-6 3.5z" stroke="#e8e8e8" stroke-width="1.1" fill="none"/></svg>
<svg class="abs" style="left:7px;top:146px" width="19" height="19" viewBox="0 0 19 19" ><path d="M2 2h6v6h-6z M10.5 2h6v6h-6z M2 10.5h6v6h-6z M10.5 10.5h6v6h-6z" stroke="#e8e8e8" stroke-width="1.1" fill="none"/></svg>
<svg class="abs" style="left:7px;top:176px" width="19" height="19" viewBox="0 0 19 19" ><circle cx="9.5" cy="9.5" r="8.3" stroke="#e8e8e8" stroke-width="1.2" fill="none"/><path d="M6.8 7.3a2.7 2.7 0 1 1 3.6 2.5c-.7.3-.9.8-.9 1.6v.8" stroke="#e8e8e8" stroke-width="1.2" fill="none"/><circle cx="9.5" cy="14.3" r=".8" fill="#e8e8e8"/></svg>
<svg class="abs" style="left:7px;top:976px" width="20" height="20" viewBox="0 0 20 20" ><path d="M2.5 2.5h5.5v5.5h-5.5z M2.5 11h5.5v5.5h-5.5z M11 3.5h7 M11 6.5h7 M11 12h7 M11 15.5h7" stroke="#e8e8e8" stroke-width="1.1" fill="none"/></svg>
<div class="abs" style="left:33px;top:110px;width:995px;height:893px;background:#333333"></div>
<div class="abs" style="left:89px;top:110px;width:787px;height:875px;background:#ffffff"></div>
<div class="abs" style="left:89px;top:991px;width:787px;height:13px;background:#ffffff"></div>
<div class="abs" style="left:1019px;top:234px;width:9px;height:56px;background:#9a9a9a;border-radius:2px 0 0 2px"></div>
<div class="cn" style="top:116.1px">直径略大于车站伞状支护的直径，并通过测量定位，以避免在安装伞状支护时损坏隧道</div>
<div class="cn" style="top:135.3px">衬砌结构。</div>
<div class="cn" style="top:178.1px">继续进行<span class="hw" style="width:25.05px">SD2</span>的开挖推进，到达端墙部位时，施工方式与<span class="hw" style="width:25.05px">SD1</span>相同，随后拆除临时墙体，</div>
<div class="cn" style="top:197.3px">并对拱顶最后区段进行修复。在临时墙体区域的端墙部位，需进行相应的修补工作，即</div>
<div class="cn" style="top:216.5px">展开此前预留自<span class="hw" style="width:25.05px">SD1</span>和<span class="hw" style="width:25.05px">SD2</span>两侧的<span class="fw" style="text-align:right">“</span><span class="hw" style="width:8.35px">L</span><span class="fw" style="text-align:left">”</span>形钢筋，铺设焊接钢筋网，然后完成端墙的衬砌施</div>
<div class="cn" style="top:235.8px">工。同时，应完成隧道主体的衬砌工作。</div>
<div class="cn" style="top:353.0px">对于仰拱施工，可在<span class="hw" style="width:25.05px">SD2</span>掘进至少推进<span class="hw" style="width:16.70px">10</span>米，且拱顶二次衬砌已覆盖临时墙体全部拆除区</div>
<div class="cn" style="top:372.0px">域后开始实施。此条件并非洞室整体施工的强制前提，因此也可选择先完成全部拱顶施</div>
<div class="cn" style="top:391.0px">工后再进行仰拱施工。</div>
<div class="cn" style="top:479.0px">需清除竖井内先前回填的临时填充物，以便进入拱顶区域，随后拆除下图所示的第<span class="hw" style="width:8.35px">3</span>断面</div>
<div class="cn" style="top:498.0px">全部结构，该区域对应仰拱的完整断面位置。</div>
<svg class="abs" style="left:0;top:0" width="1028" height="1040" font-family="Liberation Sans">
<rect x="181" y="561" width="605" height="254" fill="#fcfcfc"/>
<g transform="translate(72.20000000000005 37.2) scale(0.968 0.965)">
<use href="#dl"/>
<path d="M213 735 L221.5 730 V733.3 H230.5 V736.7 H221.5 V740 Z" fill="#111"/>
<text x="480.9" y="786" font-size="10" text-anchor="middle" fill="#111">1</text>
</g>
<rect x="629" y="703" width="11" height="34" fill="#fcfcfc"/>
<rect x="189" y="664.3" width="12" height="2.6" fill="#000"/><rect x="307" y="642.3" width="15" height="2.6" fill="#000"/><rect x="307" y="650.3" width="17" height="2.6" fill="#000"/><rect x="283" y="687.3" width="17" height="2.6" fill="#000"/><rect x="283" y="695.3" width="25" height="2.6" fill="#000"/><rect x="283" y="702.3" width="17" height="2.6" fill="#000"/><rect x="288" y="739.3" width="21" height="2.6" fill="#000"/><rect x="296" y="745.3" width="12" height="2.6" fill="#000"/><rect x="412" y="645.8" width="7" height="2.6" fill="#000"/><rect x="412" y="652.8" width="7" height="2.6" fill="#000"/><rect x="500" y="644.3" width="13" height="2.6" fill="#000"/><rect x="485" y="691.8" width="9" height="2.6" fill="#000"/><rect x="636" y="715.3" width="10" height="2.6" fill="#000"/><rect x="636" y="723.3" width="16" height="2.6" fill="#000"/><rect x="683" y="573.3" width="19" height="2.6" fill="#000"/><rect x="683" y="743.3" width="17" height="2.6" fill="#000"/><rect x="504" y="740.8" width="12" height="2.6" fill="#000"/><rect x="625" y="745.8" width="9" height="2.6" fill="#000"/><rect x="497" y="767.3" width="9" height="2.6" fill="#000"/><rect x="640" y="767.8" width="8" height="2.6" fill="#000"/><rect x="640" y="773.3" width="10" height="2.6" fill="#000"/><rect x="651" y="803.3" width="20" height="2.6" fill="#000"/><rect x="651" y="810.3" width="13" height="2.6" fill="#000"/>
<text x="685" y="569.5" font-size="5.6" fill="#333">EL. 617.400</text>
<text x="685" y="739.5" font-size="5.6" fill="#333">EL. 595.760</text>
<text x="489" y="702" font-size="5" fill="#444">e=30 cm</text>
<text x="503" y="797" font-size="8" fill="#666">详图</text>
<text x="422" y="645" font-size="8" fill="#777">车</text><text x="422" y="655" font-size="8" fill="#777">站</text>
<text x="714" y="665" font-size="8" fill="#888">车</text><text x="714" y="675" font-size="8" fill="#888">站</text><text x="714" y="685" font-size="8" fill="#888">竖</text><text x="714" y="695" font-size="8" fill="#888">井</text>
<text x="302" y="850" font-size="7.6" fill="#444">图14：出入口通道-仰拱与反拱典型施工顺序。</text>
</svg>
<div class="abs" style="left:0px;top:1004px;width:1028px;height:36px;background:#363636"></div>
<div class="abs" style="left:0px;top:1004px;width:1028px;height:1px;background:#464646"></div>
<div class="t" style="left:5px;top:1016px;font-size:12.2px;line-height:16px;color:#e6e6e6">页面大小: 21.59×27.94 厘米</div>
<div class="abs" style="left:166px;top:1008px;width:1px;height:30px;background:#555"></div>
<div class="t" style="left:171px;top:1016px;font-size:12px;line-height:16px;color:#e6e6e6">当前页未设置测量比例</div>
<div class="abs" style="left:296px;top:1008px;width:1px;height:30px;background:#555"></div>
<svg class="abs" style="left:374px;top:1015px" width="12" height="16" viewBox="0 0 12 16" ><path d="M9 2L3 8l6 6" stroke="#ddd" stroke-width="1.2" fill="none"/></svg>
<div class="abs" style="left:395px;top:1012px;width:40px;height:21px;background:#fff;border-radius:2px"></div>
<div class="t" style="left:395px;top:1016px;font-size:12.5px;line-height:16px;color:#111"><div style="width:40px;text-align:center">31</div></div>
<div class="t" style="left:441px;top:1016px;font-size:12.2px;line-height:16px;color:#e6e6e6">/&nbsp;&nbsp;204</div>
<svg class="abs" style="left:482px;top:1015px" width="12" height="16" viewBox="0 0 12 16" ><path d="M3 2l6 6-6 6" stroke="#ddd" stroke-width="1.2" fill="none"/></svg>
<svg class="abs" style="left:512px;top:1016px" width="15" height="15" viewBox="0 0 15 15" ><path d="M1.5 1.5h4.5v4.5h-4.5z M8.5 1.5h4.5v4.5h-4.5z M1.5 8.5h4.5v4.5h-4.5z" stroke="#ddd" stroke-width="1" fill="none"/><circle cx="10.7" cy="10.7" r="2.5" stroke="#ddd" stroke-width="1" fill="none"/></svg>
<div class="t" style="left:532px;top:1016px;font-size:12px;line-height:16px;color:#f2f2f2;font-weight:bold">标注分类</div>
<div class="abs" style="left:594px;top:1013px;width:151px;height:21px;background:#454545;border:1px solid #9a9a9a"></div>
<div class="abs" style="left:598px;top:1016px;width:16px;height:15px;background:#000"></div>
<div class="t" style="left:619px;top:1016px;font-size:12.2px;line-height:16px;color:#e6e6e6">未分类</div>
<svg class="abs" style="left:728px;top:1019px" width="12" height="8" viewBox="0 0 12 8" ><path d="M1 1h10l-5 6z" fill="#eee"/></svg>
<div class="abs" style="left:750px;top:1008px;width:1px;height:30px;background:#555"></div>
<div class="abs" style="left:779px;top:1008px;width:1px;height:30px;background:#555"></div>
<div class="abs" style="left:808px;top:1008px;width:1px;height:30px;background:#555"></div>
<div class="abs" style="left:871px;top:1008px;width:1px;height:30px;background:#555"></div>
<div class="abs" style="left:932px;top:1008px;width:1px;height:30px;background:#555"></div>
<svg class="abs" style="left:758px;top:1015px" width="17" height="17" viewBox="0 0 17 17" ><circle cx="7" cy="7" r="5.5" stroke="#ddd" stroke-width="1.1" fill="none"/><path d="M11 11l4.5 4.5 M4.5 7h5 M7 4.5v5" stroke="#ddd" stroke-width="1.1"/></svg>
<svg class="abs" style="left:787px;top:1017px" width="16" height="12" viewBox="0 0 16 12" ><path d="M1 6c2.5-4 11.5-4 14 0c-2.5 4-11.5 4-14 0z" stroke="#ddd" stroke-width="1.1" fill="none"/><circle cx="8" cy="6" r="2.3" stroke="#ddd" stroke-width="1.1" fill="none"/></svg>
<div class="abs" style="left:817px;top:1008px;width:23px;height:30px;background:#555;border-radius:2px"></div>
<svg class="abs" style="left:820px;top:1014px" width="17" height="18" viewBox="0 0 17 18" ><path d="M4 10V5.5a1.3 1.3 0 0 1 2.6 0V9 M6.6 9V3.5a1.3 1.3 0 0 1 2.6 0V9 M9.2 9V4a1.3 1.3 0 0 1 2.6 0V9 M11.8 9V6a1.3 1.3 0 0 1 2.6 0v5c0 3.5-2.5 5.5-5.5 5.5s-4.5-1.5-6-4l-1.5-3a1.2 1.2 0 0 1 2-1.2L4 10" stroke="#eee" stroke-width="1.1" fill="none"/></svg>
<svg class="abs" style="left:845px;top:1015px" width="16" height="17" viewBox="0 0 16 17" ><path d="M2 2l11 5-4.5 1.5 4 5-2 1.5-4-5L3 13z" stroke="#ddd" stroke-width="1.1" fill="none" stroke-linejoin="round"/></svg>
<svg class="abs" style="left:882px;top:1016px" width="15" height="15" viewBox="0 0 15 15" ><path d="M1.5 1.5h12v12h-12z M7.5 1.5v12 M3.5 4.5h2 M3.5 7h2 M3.5 9.5h2 M9.5 4.5h2 M9.5 7h2 M9.5 9.5h2" stroke="#ddd" stroke-width="1.1" fill="none"/></svg>
<div class="abs" style="left:904px;top:1008px;width:23px;height:30px;background:#555;border-radius:2px"></div>
<svg class="abs" style="left:908px;top:1015px" width="16" height="16" viewBox="0 0 16 16" ><path d="M1.5 1.5v3h13v-3 M1.5 14.5v-3h13v3 M1.5 8h13 M3 6h10 M3 10h10" stroke="#eee" stroke-width="1.1" fill="none"/></svg>
<div class="abs" style="left:945px;top:1023px;width:12px;height:1px;background:#ddd"></div>
<div class="t" style="left:966px;top:1016px;font-size:12.2px;line-height:16px;color:#e6e6e6">100%</div>
<svg class="abs" style="left:1009px;top:1017px" width="13" height="13" viewBox="0 0 13 13" ><path d="M0 6.5h12 M6.5 0v12" stroke="#f0f0f0" stroke-width="1"/></svg>
<svg class="abs" style="left:1013px;top:1025px" width="15" height="15" viewBox="0 0 15 15" ><path d="M15 0V15H0A15 15 0 0 0 15 0Z" fill="#0a0a0a"/></svg>
<div class="abs" style="left:0px;top:0px;width:1px;height:1040px;background:#1f3c88"></div>
</div>
</body></html>
